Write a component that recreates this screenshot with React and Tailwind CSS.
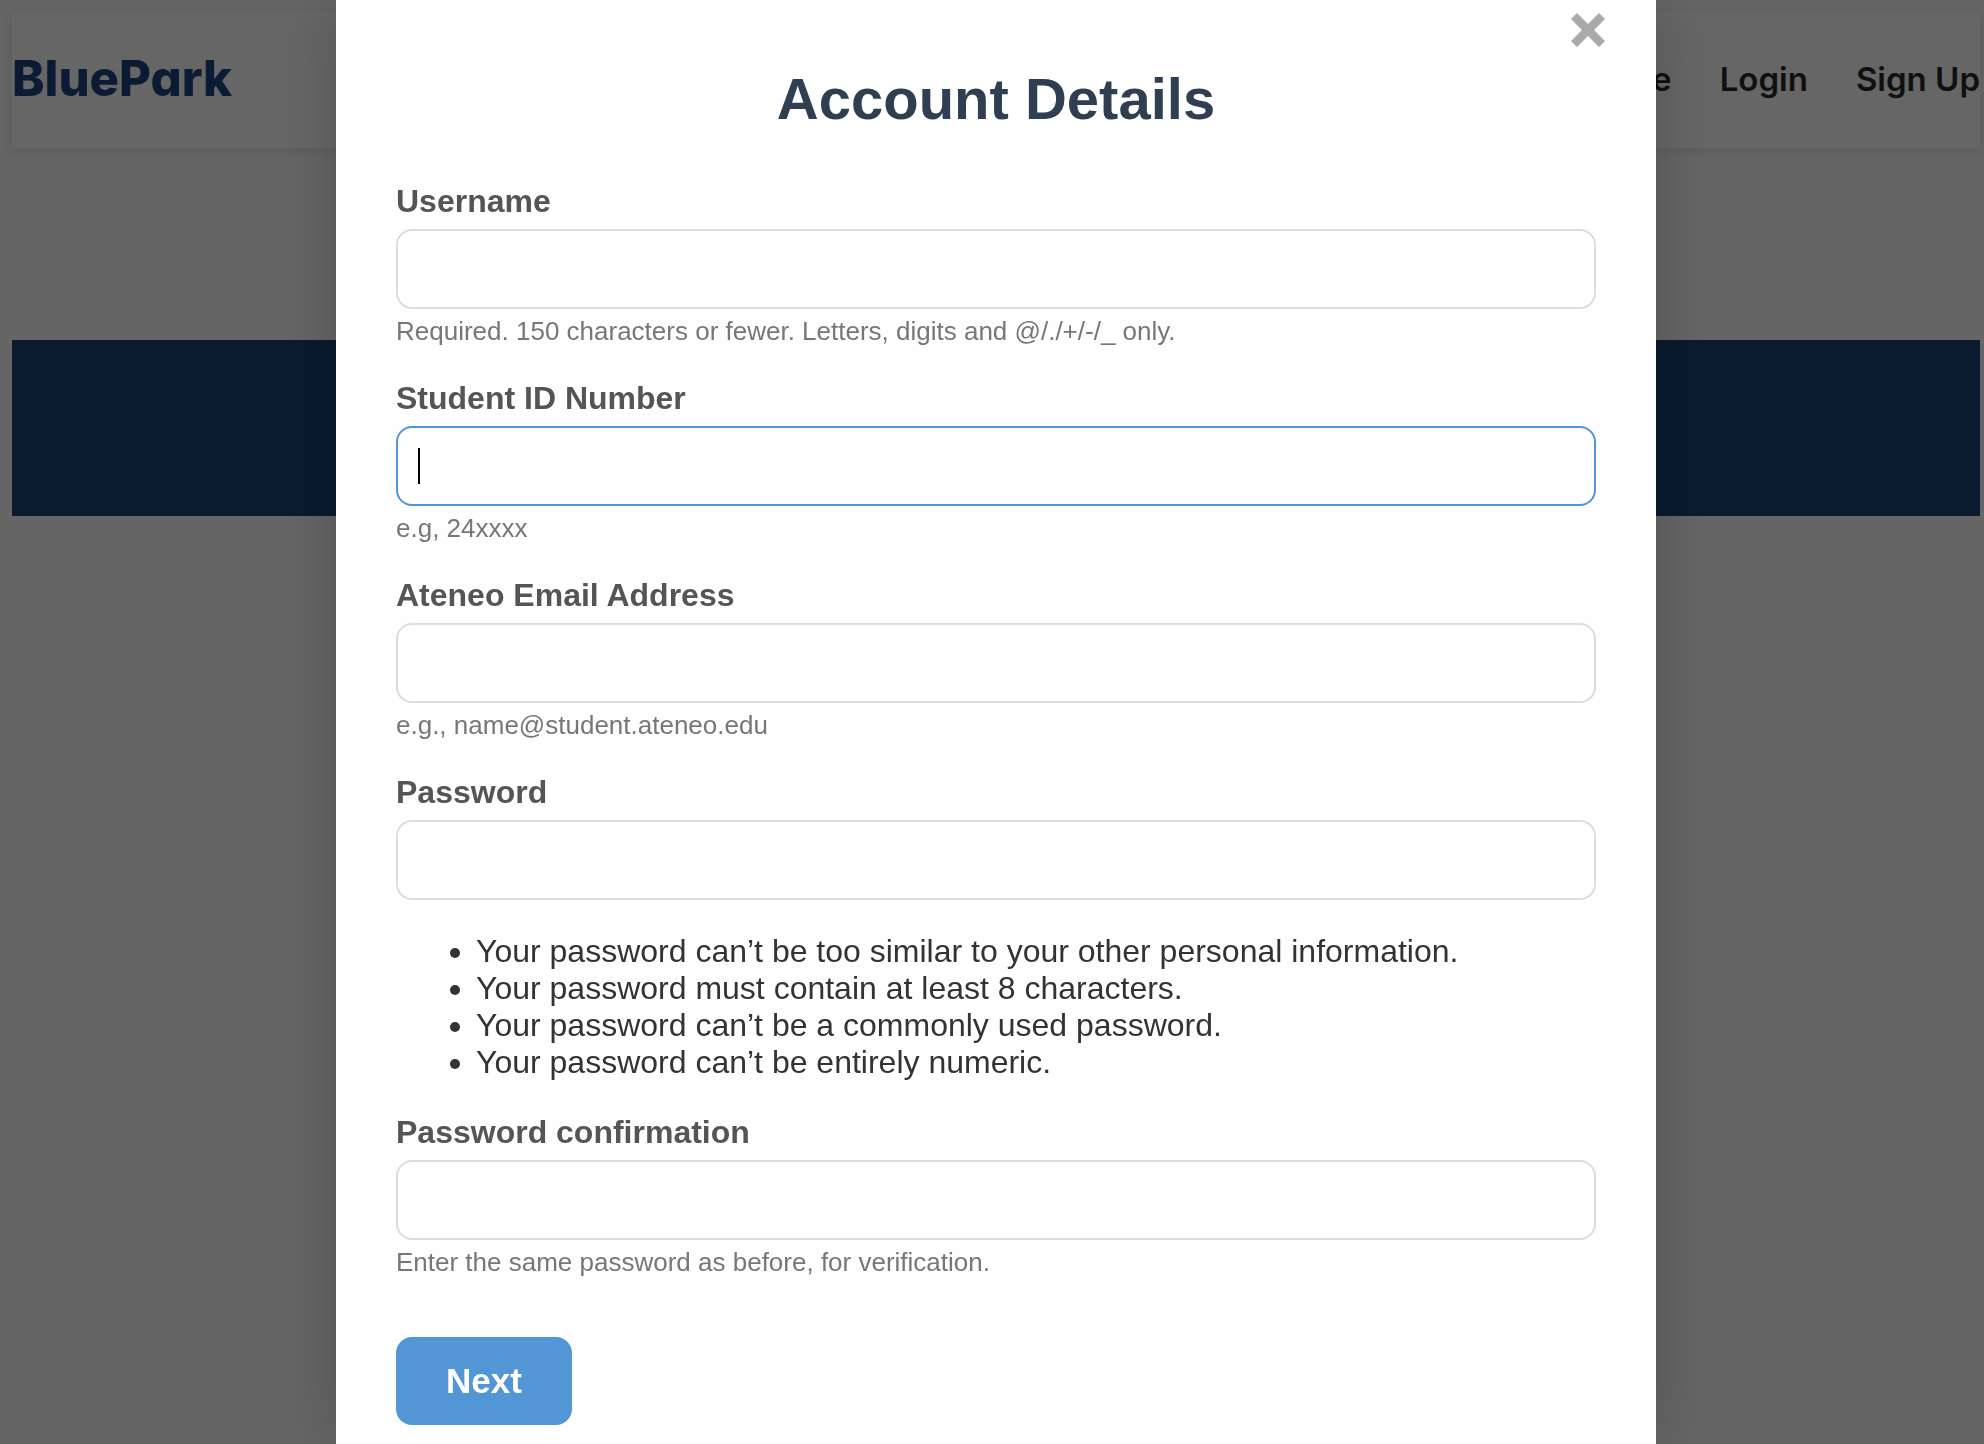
const fields = [
  { id: "username", label: "Username", type: "text", help: "Required. 150 characters or fewer. Letters, digits and @/./+/-/_ only." },
  { id: "student-id", label: "Student ID Number", type: "text", help: "e.g, 24xxxx", active: true },
  { id: "email", label: "Ateneo Email Address", type: "email", help: "e.g., name@student.ateneo.edu" },
  {
    id: "password",
    label: "Password",
    type: "password",
    rules: [
      "Your password can’t be too similar to your other personal information.",
      "Your password must contain at least 8 characters.",
      "Your password can’t be a commonly used password.",
      "Your password can’t be entirely numeric.",
    ],
  },
  { id: "password2", label: "Password confirmation", type: "password", help: "Enter the same password as before, for verification." },
];

function Field({ id, label, type, help, rules, active }) {
  return (
    <div className="flex flex-col">
      <label htmlFor={id} className="mb-2.5 self-start text-[32px] leading-9 font-bold text-[#555555]">
        {label}
      </label>
      <div className="relative">
        <input
          id={id}
          type={type}
          className={
            active
              ? "block h-20 w-full rounded-2xl border-2 border-[#5295d6] bg-white px-5 text-[32px] outline-none"
              : "block h-20 w-full rounded-2xl border-2 border-[#dddddd] bg-white px-5 text-[32px] outline-none"
          }
        />
        {active && <span className="absolute top-[22px] left-[22px] h-9 w-0.5 bg-black" />}
      </div>
      {help && <p className="mt-1.5 text-[26px] leading-8 text-[#777777]">{help}</p>}
      {rules && (
        <ul className="mt-[33px] list-disc pl-20 text-[32px] leading-[37px] text-[#333333]">
          {rules.map((rule) => (
            <li key={rule}>{rule}</li>
          ))}
        </ul>
      )}
    </div>
  );
}

function SitePage() {
  return (
    <div className="min-h-screen bg-[#f9fdf9] pt-3 pr-1 pl-3">
      <header className="flex h-[136px] items-center justify-between bg-white font-['Inter',sans-serif] shadow-[0_4px_10px_rgba(0,0,0,0.1)] [font-feature-settings:'cv11']">
        <a href="#" className="pb-1 text-[49px] leading-none font-extrabold text-[#1a4480]">
          BluePark
        </a>
        <nav className="flex gap-12 text-[33px] font-semibold text-[#28292c]">
          <a href="#">Home</a>
          <a href="#">Login</a>
          <a href="#">Sign Up</a>
        </nav>
      </header>
      <section className="mt-48 h-44 bg-[#1a4478]" />
    </div>
  );
}

export default function App() {
  return (
    <div className="h-screen overflow-hidden font-['Liberation_Sans',Arial,sans-serif]">
      <SitePage />
      <div className="fixed inset-0 flex items-start justify-center overflow-hidden bg-black/60 pl-2">
        <div role="dialog" aria-labelledby="title" className="relative min-h-screen w-full max-w-[1320px] bg-[#fefefe] px-[60px] pt-[65px] pb-5 shadow-[0_0_60px_rgba(0,0,0,0.2)]">
          <button type="button" aria-label="Close" className="absolute top-3 right-[50px] text-[#aaaaaa]">
            <svg viewBox="0 0 36 36" className="size-9" fill="currentColor">
              <path d="M7 1 18 12 29 1 35 7 24 18 35 29 29 35 18 24 7 35 1 29 12 18 1 7Z" />
            </svg>
          </button>
          <h1 id="title" className="text-center text-[58px] leading-[68px] font-bold text-[#2f3e50]">
            Account Details
          </h1>
          <form className="mt-[50px]">
            <div className="flex flex-col gap-[33px]">
              {fields.map((field) => (
                <Field key={field.id} {...field} />
              ))}
            </div>
            <button type="button" className="mt-[59px] h-[88px] rounded-2xl bg-[#5296d6] px-[50px] text-[35px] font-bold text-white">
              Next
            </button>
          </form>
        </div>
      </div>
    </div>
  );
}
